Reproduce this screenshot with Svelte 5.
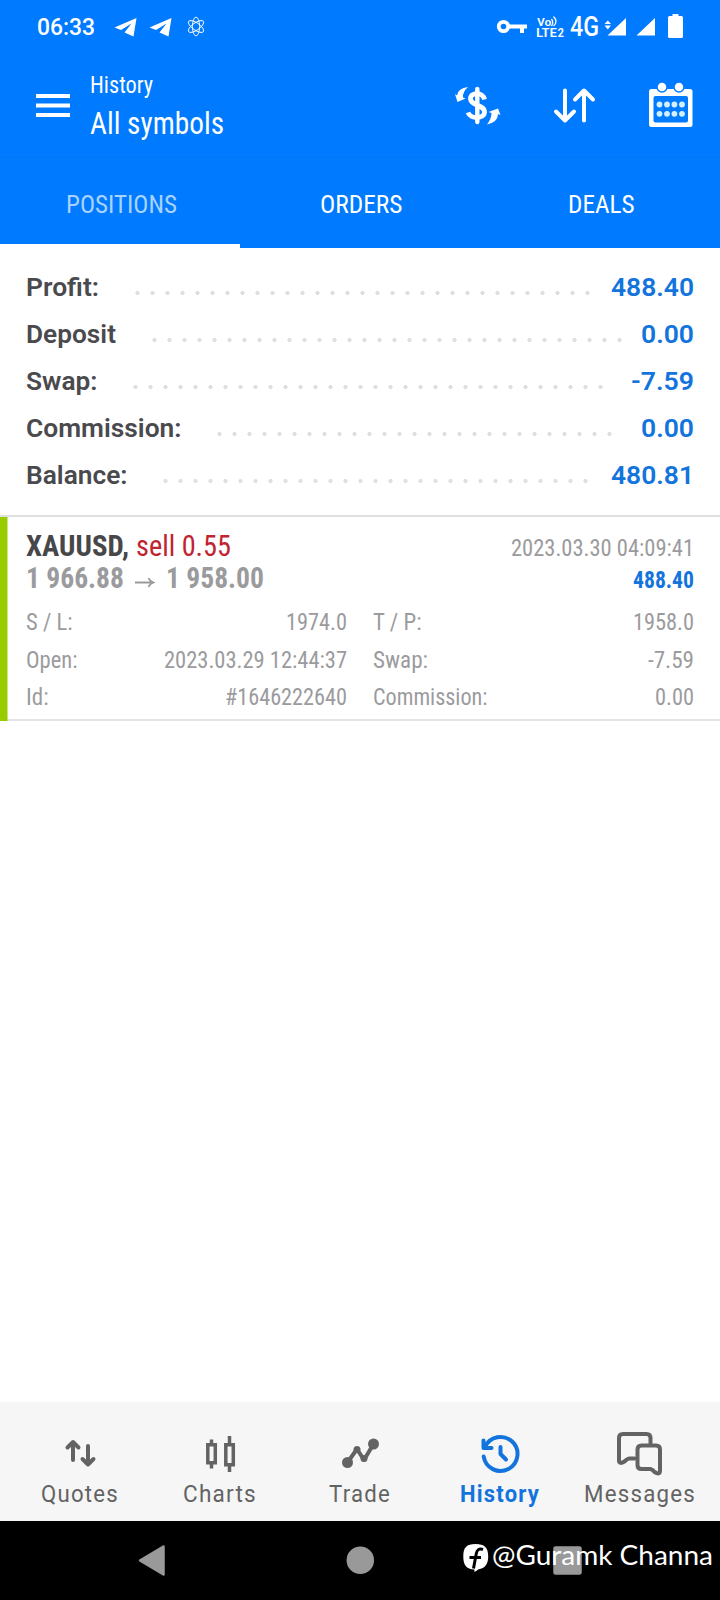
<script>
  // start / count describe the dotted leader of each row
  const summary = [
    { label: "Profit:", lw: 73, start: 130, count: 31, value: "488.40", vw: 83 },
    { label: "Deposit", lw: 90, start: 147, count: 32, value: "0.00", vw: 53 },
    { label: "Swap:", lw: 71.5, start: 128, count: 32, value: "-7.59", vw: 63 },
    { label: "Commission:", lw: 155.5, start: 212, count: 27, value: "0.00", vw: 53 },
    { label: "Balance:", lw: 101.5, start: 158, count: 29, value: "480.81", vw: 83 },
  ]

  const details = [
    { label: "S / L:", lw: 46.5, value: "1974.0", vw: 61 },
    { label: "T / P:", lw: 48.5, value: "1958.0", vw: 61 },
    { label: "Open:", lw: 51.5, value: "2023.03.29 12:44:37", vw: 183 },
    { label: "Swap:", lw: 55, value: "-7.59", vw: 46 },
    { label: "Id:", lw: 22.5, value: "#1646222640", vw: 122 },
    { label: "Commission:", lw: 114.5, value: "0.00", vw: 39 },
  ]

  const tabs = [
    { label: "POSITIONS", w: 111 },
    { label: "ORDERS", w: 82.5 },
    { label: "DEALS", w: 66.5 },
  ]

  const nav = [
    { id: "quotes", label: "Quotes", w: 78, box: "52 1402 56 80" },
    { id: "charts", label: "Charts", w: 74, box: "192 1402 56 80" },
    { id: "trade", label: "Trade", w: 62, box: "332 1402 56 80" },
    { id: "history", label: "History", w: 80, box: "472 1402 56 80" },
    { id: "messages", label: "Messages", w: 112, box: "612 1402 56 80" },
  ]

  let activeTab = $state("POSITIONS")
  let activeNav = $state("history")
</script>

<!-- single line of text squeezed to a given width -->
{#snippet fit(text, w, size, h, base, cls = "")}
  <svg class="fit {cls}" width={w} height={h}>
    <text x="0" y={base} font-size={size} textLength={w} lengthAdjust="spacingAndGlyphs">{text}</text>
  </svg>
{/snippet}

<div class="screen">
  <div class="status">
    {@render fit("06:33", 58, 23.5, 54, 35, "medium")}
    <svg class="planes" width="60" height="54" viewBox="114 0 60 54">
      <path d="M114.5 27.5 136.5 18 133.5 36.5 124.5 32.5 131.5 23.5 121 30Z" />
      <path d="M149.500 27.5 171.500 18 168.500 36.5 159.500 32.5 166.500 23.5 156 30Z" />
    </svg>
    <svg class="atom" width="20" height="54" viewBox="186 0 20 54">
      <ellipse cx="196" cy="26.500" rx="3.600" ry="9.400" />
      <ellipse cx="196" cy="26.500" rx="3.600" ry="9" transform="rotate(55 196 26.5)" />
      <ellipse cx="196" cy="26.500" rx="3.600" ry="9" transform="rotate(-55 196 26.5)" />
    </svg>
    <span class="spacer"></span>
    <svg width="36" height="54" viewBox="496 0 36 54">
      <circle cx="503.500" cy="26.500" r="4.700" fill="none" stroke="#fff" stroke-width="3.800" />
      <path d="M509 24.500h18v4h-3v4.500h-4v-4.500h-11z" />
    </svg>
    <svg width="38" height="54" viewBox="532 0 38 54">
      <text x="537" y="25.500" font-size="10.500" font-weight="500" textLength="14.500" lengthAdjust="spacingAndGlyphs">Vo</text>
      <path d="M551.500 19q2.500 3.500 0 7M553.500 16.500q5 5 0 9.500" fill="none" stroke="#fff" stroke-width="1.300" />
      <text x="536" y="37.300" font-size="13" font-weight="500" textLength="21" lengthAdjust="spacingAndGlyphs">LTE</text>
      <text x="557.500" y="37.300" font-size="12" font-weight="500" textLength="6.500" lengthAdjust="spacingAndGlyphs">2</text>
    </svg>
    {@render fit("4G", 29, 27, 54, 36, "medium")}
    <svg class="signal" width="61" height="54" viewBox="599 0 61 54">
      <path d="M604.500 24 607.800 20.500 611 24ZM604.500 25.500h6.500l-3.200 4Z" />
      <path d="M626 18v17.500h-18.500zM655 18v17.500h-18.500z" />
    </svg>
    <svg width="30" height="54" viewBox="660 0 30 54">
      <path d="M672.500 14h6v2h3q1.500 0 1.500 1.500v19q0 1.500-1.500 1.500h-12q-1.500 0-1.500-1.500v-19q0-1.500 1.500-1.500h3z" />
    </svg>
  </div>

  <header class="header">
    <svg class="menu" width="34" height="104" viewBox="36 54 34 104">
      <path d="M36 94h34v4H36zM36 103.500h34v4H36zM36 113h34v4H36z" />
    </svg>
    <div class="titles">
      {@render fit("History", 63, 24.5, 48, 39)}
      {@render fit("All symbols", 134, 32, 56, 32)}
    </div>
    <span class="spacer"></span>
    <div class="actions">
      <svg width="56" height="104" viewBox="450 54 56 104">
        <g fill="none" stroke="#fff">
          <path d="M477.300 89v33" stroke-width="4.400" stroke-linecap="round" />
          <path d="M484.500 99.500C483 91.500 470 92 470.500 99 471 106 484.500 104.500 484.500 112 484.500 119 470.500 119.500 468 112.500" stroke-width="4.800" />
        </g>
        <path d="M468 87q-10 1-11 8.500l-2-1.500 2.500 8 8-3.500-2.500-1q-.5-5.500 5-10.500z" />
        <path d="M487 124.500q11-2.500 11-10.500l2.500 1-2.500-6.500-9.500 3.500 3 1q0 5.500-4.500 11.500z" />
      </svg>
      <svg class="arrows" width="56" height="104" viewBox="546 54 56 104">
        <path d="M565 90.500v30M556 111.500l9 9 9-9M584 120.500v-30M575 99.500l9-9 9 9" />
      </svg>
      <svg width="56" height="104" viewBox="642 54 56 104">
        <rect x="649" y="89" width="43.500" height="38" rx="2.500" />
        <rect class="hole" x="653.500" y="96" width="34.500" height="26.500" rx="2" />
        <circle class="ring" cx="662" cy="87" r="5" />
        <circle class="ring" cx="679" cy="87" r="5" />
        {#each [104.5, 113.8] as cy}
          {#each [659.5, 667, 674.4, 682] as cx}
            <circle class="day" {cx} {cy} r="2.900" />
          {/each}
        {/each}
      </svg>
    </div>
  </header>

  <div class="tabs">
    {#each tabs as tab}
      <button class="tab" class:active={activeTab === tab.label} onclick={() => (activeTab = tab.label)}>
        {@render fit(tab.label, tab.w, 26.5, 86, 55)}
      </button>
    {/each}
  </div>

  <section class="summary">
    {#each summary as row}
      <div class="row">
        {@render fit(row.label, row.lw, 26.5, 47, 36, "semi")}
        <span class="dots" style="margin-left: {row.start - 26 - row.lw}px; width: {row.count * 15}px"></span>
        <span class="spacer"></span>
        {@render fit(row.value, row.vw, 26.5, 47, 36, "semi blue")}
      </div>
    {/each}
  </section>

  <article class="deal">
    <div class="row">
      {@render fit("XAUUSD,", 103, 29.5, 48, 39, "bold")}
      <span class="side">{@render fit("sell 0.55", 95, 29.5, 48, 39, "red")}</span>
      <span class="spacer"></span>
      {@render fit("2023.03.30 04:09:41", 183, 24, 48, 39)}
    </div>
    <div class="row">
      {@render fit("1 966.88", 98, 29.5, 32, 23, "bold")}
      <svg class="to" width="20" height="32" viewBox="0 0 20 32">
        <path d="M0 17.500h18M13.500 13q1.500 3.500 5 4.500-3.500 1-5 4.500" />
      </svg>
      {@render fit("1 958.00", 98, 29.5, 32, 23, "bold")}
      <span class="spacer"></span>
      {@render fit("488.40", 61, 24, 32, 23, "bold blue")}
    </div>
    <div class="details">
      {#each details as item}
        <div class="detail">
          {@render fit(item.label, item.lw, 24, 37.5, 33)}
          {@render fit(item.value, item.vw, 24, 37.5, 33)}
        </div>
      {/each}
    </div>
  </article>

  <main class="empty"></main>

  <nav class="nav">
    {#each nav as item}
      <button class="nav-item" class:active={activeNav === item.id} onclick={() => (activeNav = item.id)}>
        <svg class="icon" width="56" height="80" viewBox={item.box}>
          {#if item.id === "quotes"}
            <path d="M73 1460v-18M67.500 1447.500l5.500-5.500 5.500 5.500M88 1446v18M82.500 1459l5.500 5.500 5.500-5.500" />
          {:else if item.id === "charts"}
            <g class="square">
              <path d="M207.800 1444.800h7.500v18h-7.500zM225.800 1444.800h7.500v20h-7.500z" />
              <path d="M211.500 1439.500v4M211.500 1464v4.500M229.500 1436v8M229.500 1466v6" />
            </g>
          {:else if item.id === "trade"}
            <path d="M347.500 1462.500 357 1449 364 1460 373.500 1444" />
            <g class="solid">
              <circle cx="347.500" cy="1462.500" r="5.500" />
              <circle cx="373.500" cy="1444" r="5.500" />
              <circle cx="357" cy="1449.500" r="3.500" />
              <circle cx="364" cy="1458.500" r="3.500" />
            </g>
          {:else if item.id === "history"}
            <path d="M483.700 1456.500A17 17 0 1 0 485 1447" />
            <path d="M483.500 1440.500v7.500h8M500.500 1447v7l5.500 5.500" />
          {:else}
            <path d="M634.500 1458.500h-5q-2 0-5 3-5 3-5.500-.5v-23q0-4 4-4h23.500q4 0 4 4v5" />
            <path d="M660 1470.500v-21q0-4-4-4h-14.500q-4 0-4 4v15.500q0 4 4 4h8.500q2 0 4.500 3 5.500 3.500 5.500-1.500z" />
          {/if}
        </svg>
        {@render fit(item.label, item.w, 23.5, 39, 20)}
      </button>
    {/each}
  </nav>

  <div class="system">
    <svg width="720" height="79" viewBox="0 1521 720 79">
      <path class="key" d="M140 1560.500 163.500 1546.500V1574.500Z" />
      <circle class="key" cx="360.300" cy="1560.300" r="12.500" />
      <rect class="key" x="554.500" y="1547.500" width="26" height="26" rx="1" />
    </svg>
    <div class="mark">
      <svg width="28" height="79" viewBox="462 1521 28 79">
        <path d="M475.500 1544c9 0 12.700 3.500 12.700 12.500 0 8-3.500 12-9.500 12.700l-4 2.800-.5-2.500c-8-.5-10.900-4.500-10.900-13 0-9 3.200-12.500 12.200-12.500z" />
        <path class="f" d="M483 1549.500c-4-1.500-6 .5-6.700 4l-2.800 15M469.500 1557.500h11.500" />
      </svg>
      {@render fit("@Guramk Channa", 221, 27, 79, 44, "name")}
    </div>
  </div>
</div>

<style>
  :global(body) {
    background: #fff;
  }

  .screen {
    display: flex;
    flex-direction: column;
    width: 720px;
    height: 1600px;
    font-family: Roboto, "Liberation Sans", sans-serif;
    font-stretch: 75%;
    color: #4a4a4e;
  }

  svg {
    display: block;
    flex: none;
  }

  .fit {
    overflow: visible;
    fill: currentColor;
  }

  button {
    border: 0;
    padding: 0;
    background: none;
    font: inherit;
    font-stretch: inherit;
    color: inherit;
    cursor: pointer;
  }

  .medium {
    font-weight: 500;
    font-stretch: 90%;
  }

  .semi {
    font-weight: 650;
    font-stretch: 92%;
  }

  .bold {
    font-weight: 700;
  }

  .spacer {
    flex: 1;
  }

  .row {
    display: flex;
  }

  .status {
    display: flex;
    height: 54px;
    padding: 0 30px 0 37px;
    background: #007aff;
    color: #fff;
    fill: #fff;
  }

  .planes {
    margin-left: 19px;
  }

  .atom {
    margin-left: 12px;
    fill: none;
    stroke: #fff;
    stroke-width: 0.9;
  }

  .header {
    display: flex;
    height: 104px;
    padding: 0 22px 0 36px;
    background: #007aff;
    box-shadow: inset 0 -1px #0576f2;
    color: #fff;
    fill: #fff;
  }

  .titles {
    margin-left: 20px;
  }

  .actions {
    display: flex;
    gap: 40px;
  }

  .arrows {
    fill: none;
    stroke: #fff;
    stroke-width: 4;
    stroke-linecap: round;
    stroke-linejoin: round;
  }

  .hole {
    fill: #007aff;
  }

  .ring {
    stroke: #007aff;
    stroke-width: 1.5;
  }

  .day {
    fill: #d4f0ff;
  }

  .tabs {
    display: grid;
    grid-template-columns: repeat(3, 1fr);
    background: #007aff;
    color: #fff;
  }

  .tab {
    display: flex;
    justify-content: center;
    height: 90px;
    padding-left: 2px;
    border-bottom: 4px solid transparent;
  }

  .tab.active {
    color: #a9d3ff;
    border-bottom-color: #fff;
  }

  .summary {
    padding: 12px 26px 20px;
    border-bottom: 2px solid #e0e0e0;
  }

  .blue {
    color: #1274dc;
  }

  .red {
    color: #c0242f;
  }

  .dots {
    background: radial-gradient(circle at 7.5px 33px, #dfdfdf 1.7px, transparent 2.5px) 0 0 / 15px 47px;
  }

  .deal {
    box-sizing: border-box;
    height: 204px;
    padding: 0 26px;
    background:
      linear-gradient(#9c0, #9c0) 0 0 / 7.5px 100% no-repeat,
      linear-gradient(#e4e4e4, #e4e4e4) 0 100% / 100% 2px no-repeat;
    color: #9b9b9e;
  }

  .deal .row:first-child > .bold {
    color: #47474a;
  }

  .side {
    margin-left: 7px;
  }

  .to {
    margin: 0 11px;
    fill: none;
    stroke: #9b9b9e;
    stroke-width: 1.8;
  }

  .details {
    display: grid;
    grid-template-columns: 1fr 1fr;
    column-gap: 26px;
  }

  .detail {
    display: flex;
    justify-content: space-between;
  }

  .empty {
    flex: 1;
  }

  .nav {
    display: grid;
    grid-template-columns: repeat(5, 1fr);
    height: 119px;
    padding: 0 10px;
    background: #f6f6f6;
    color: #636363;
    font-stretch: 100%;
  }

  .nav-item {
    display: flex;
    flex-direction: column;
    align-items: center;
  }

  .nav-item.active {
    color: #1274dc;
    font-weight: 700;
  }

  .nav-item :global(text) {
    letter-spacing: 1.3px;
  }

  .icon {
    fill: none;
    stroke: currentColor;
    stroke-width: 4;
    stroke-linecap: round;
    stroke-linejoin: round;
  }

  .square {
    stroke-width: 3.5;
    stroke-linecap: butt;
    stroke-linejoin: miter;
  }

  .solid {
    fill: currentColor;
    stroke: none;
  }

  .system {
    position: relative;
    height: 79px;
    background: #000;
    color: #fff;
  }

  .key {
    fill: #999;
    stroke: #999;
    stroke-width: 2.5;
    stroke-linejoin: round;
  }

  .mark {
    position: absolute;
    top: 0;
    left: 462px;
    display: flex;
    gap: 2px;
    fill: #fff;
  }

  .mark .f {
    fill: none;
    stroke: #000;
    stroke-width: 3;
  }

  .name {
    font-family: Lato, "Open Sans", sans-serif;
  }
</style>
